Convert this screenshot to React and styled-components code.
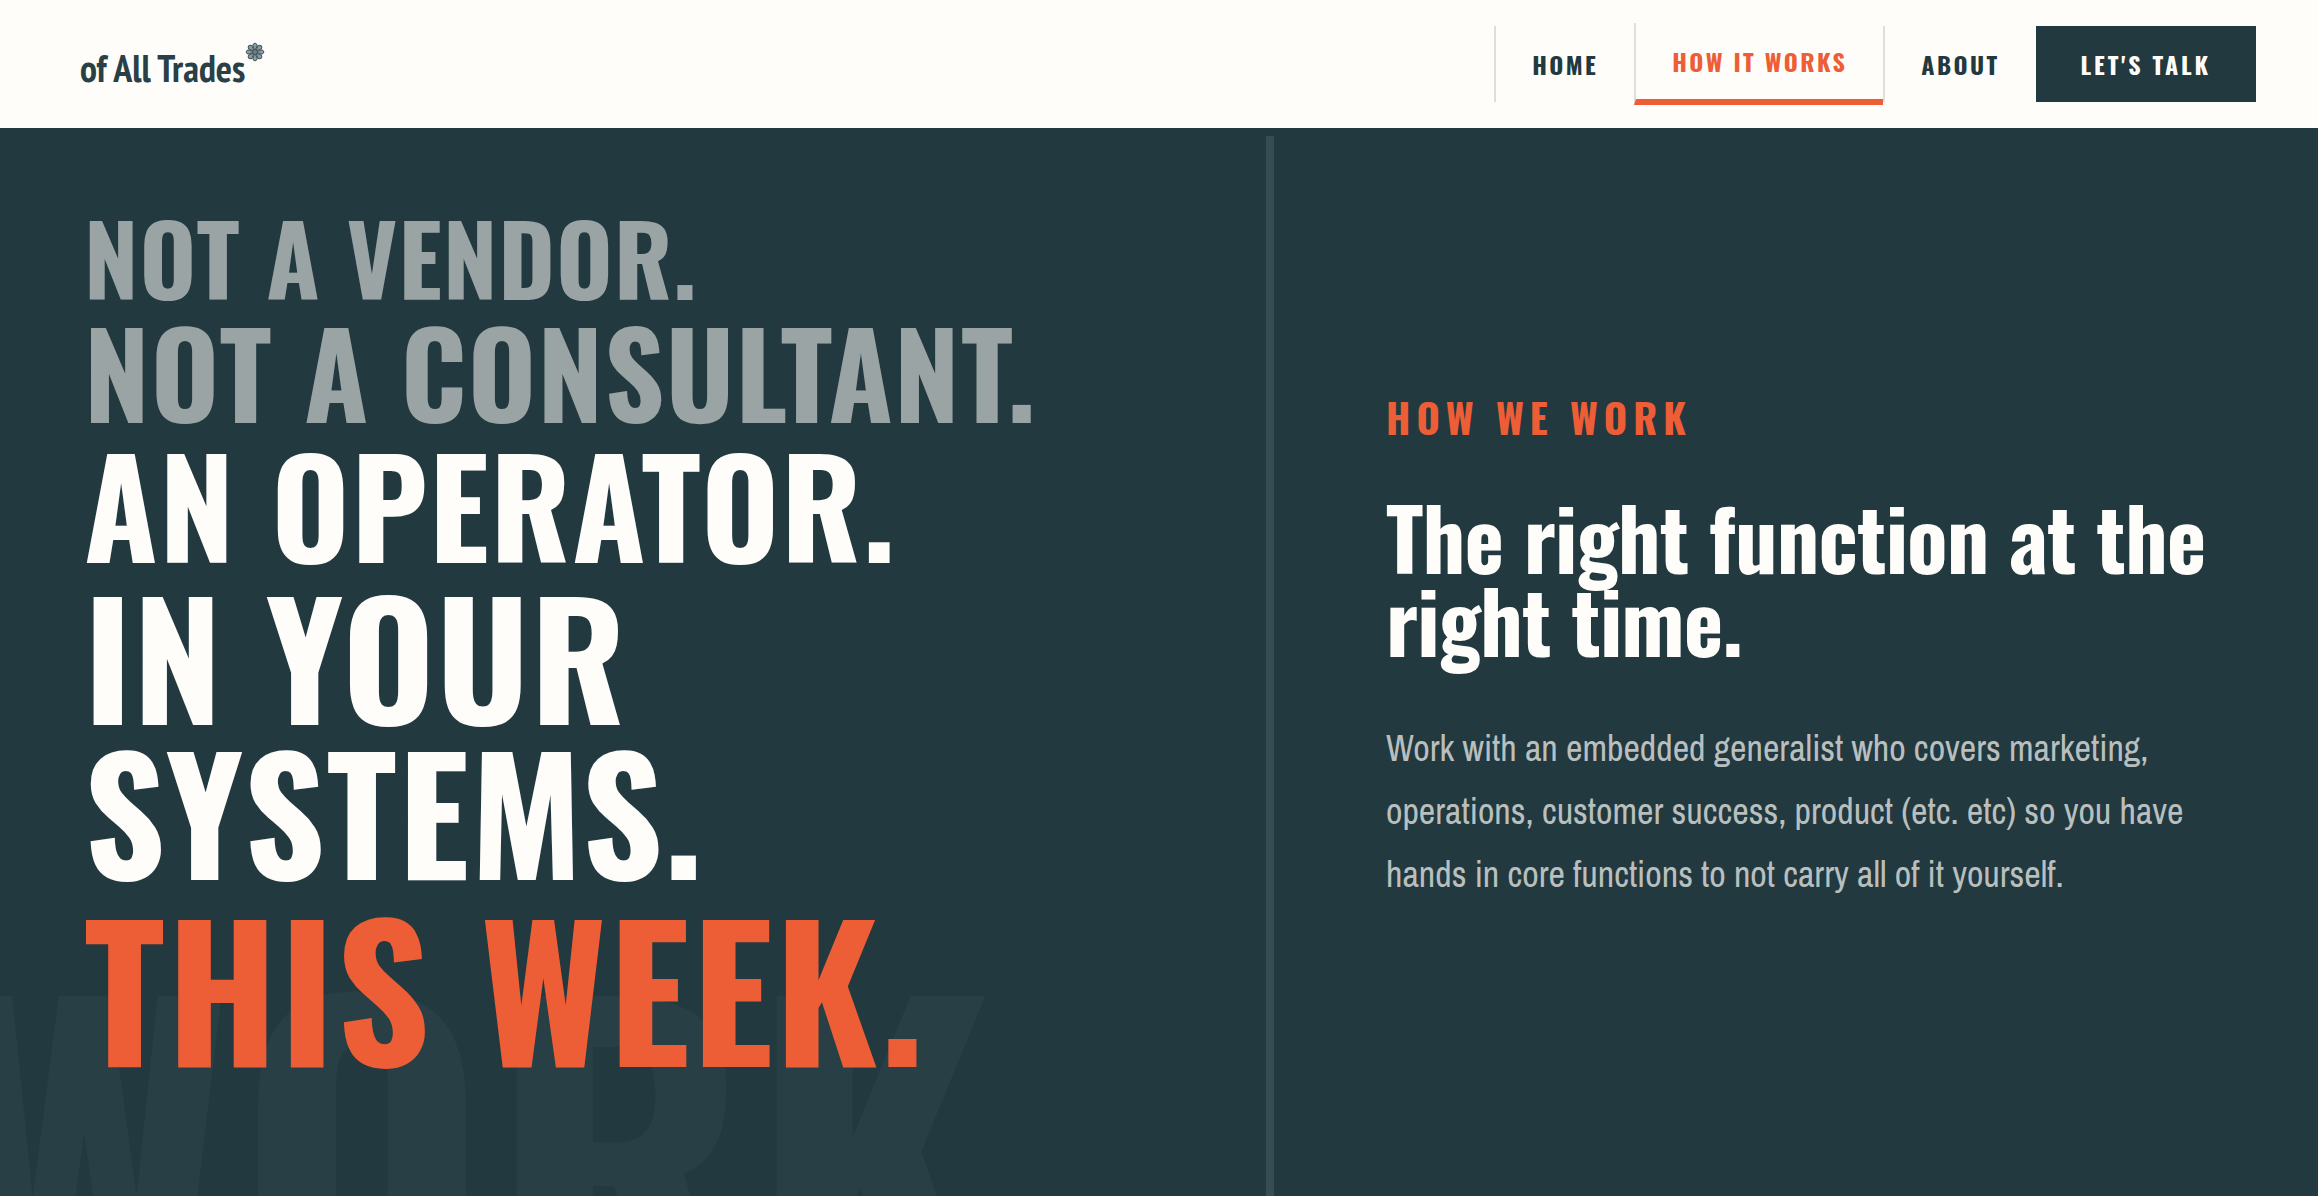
import React from "react";
import styled, { createGlobalStyle } from "styled-components";

const ink = "#22393f";
const cream = "#fefdf9";
const orange = "#ed5e37";

const GlobalStyle = createGlobalStyle`
  *, *::before, *::after {
    box-sizing: border-box;
  }

  body {
    margin: 0;
    background: ${ink};
    font-family: "Arial Narrow", "Archivo Narrow", "Liberation Sans", sans-serif;
  }
`;

const Page = styled.div`
  display: flex;
  flex-direction: column;
  min-height: 100vh;
`;

const Header = styled.header`
  display: flex;
  justify-content: space-between;
  align-items: center;
  height: 136px;
  padding: 0 62px 0 80px;
  background: ${cream};
  border-bottom: 8px solid ${ink};
`;

const Logo = styled.a`
  display: flex;
  align-items: flex-start;
  padding-top: 8px;
  color: #2a4047;
  font-family: "PT Sans Narrow", "Open Sans Condensed", sans-serif;
  font-size: 38px;
  font-weight: 700;
  line-height: 52px;
  text-decoration: none;
`;

const Nav = styled.nav`
  display: flex;
  align-items: center;
`;

const NavLink = styled.a`
  padding: 20px 36px;
  border-left: 2px solid rgba(34, 57, 63, 0.15);
  border-bottom: ${(p) => (p.$active ? `6px solid ${orange}` : "none")};
  color: ${(p) => (p.$active ? orange : ink)};
  font-family: Oswald, sans-serif;
  font-size: 24px;
  font-weight: 700;
  line-height: 36px;
  letter-spacing: 0.1em;
  text-transform: uppercase;
  text-decoration: none;
`;

const TalkLink = styled(NavLink)`
  padding: 20px 45px;
  border-left: none;
  background: ${ink};
  color: ${cream};
  letter-spacing: 0.12em;
`;

const Hero = styled.main`
  position: relative;
  flex: 1;
  display: grid;
  grid-template-columns: 1274fr 1044fr;
  overflow: hidden;
`;

const Watermark = styled.span`
  position: absolute;
  left: -64px;
  bottom: -166px;
  color: rgba(254, 253, 249, 0.03);
  font-family: Oswald, sans-serif;
  font-size: 426px;
  font-weight: 700;
  line-height: 1;
  letter-spacing: 0.01em;
  pointer-events: none;
`;

const Left = styled.section`
  padding: 73px 80px 40px 84px;
  border-right: 8px solid rgba(254, 253, 249, 0.1);
`;

const Headline = styled.h1`
  position: relative;
  display: flex;
  flex-direction: column;
  gap: 9px;
  margin: 0;
  font-family: Oswald, sans-serif;
  font-weight: 700;
  text-transform: uppercase;
`;

const Line = styled.span`
  color: ${(p) => p.$color || cream};
  font-size: ${(p) => p.$size}px;
  line-height: 0.98;
  letter-spacing: 0.01em;
`;

const Right = styled.section`
  display: flex;
  flex-direction: column;
  justify-content: center;
  padding: 0 112px 40px;
`;

const Eyebrow = styled.p`
  margin: 0 0 48px;
  color: ${orange};
  font-family: Oswald, sans-serif;
  font-size: 40px;
  font-weight: 700;
  line-height: 60px;
  letter-spacing: 0.15em;
  text-transform: uppercase;
`;

const Title = styled.h2`
  margin: 0 0 56px;
  color: ${cream};
  font-family: Oswald, sans-serif;
  font-size: 84px;
  font-weight: 700;
  line-height: 83px;
  letter-spacing: -0.01em;
`;

const Text = styled.p`
  margin: 0;
  color: rgba(254, 253, 249, 0.7);
  font-size: 36px;
  line-height: 63px;
`;

const muted = "rgba(254, 253, 249, 0.55)";

const lines = [
  { text: "Not a vendor.", size: 97, color: muted },
  { text: "Not a consultant.", size: 117, color: muted },
  { text: "An operator.", size: 134 },
  { text: "In your systems.", size: 158 },
  { text: "This week.", size: 182, color: orange },
];

const petals = [0, 45, 90, 135, 180, 225, 270, 315];

const Flower = () => (
  <svg width="20" height="20" viewBox="0 0 20 20" aria-hidden="true">
    {petals.map((angle) => (
      <g key={angle} transform={`rotate(${angle} 10 10)`}>
        <path
          d="M10 9 L8 4 A2.1 2.1 0 1 1 12 4 Z"
          fill="#8d9ca0"
          stroke="#3c5158"
          strokeWidth="1"
        />
      </g>
    ))}
    <circle cx="10" cy="10" r="2" fill="#6b7d82" />
  </svg>
);

const App = () => {
  return (
    <Page>
      <GlobalStyle />
      <Header>
        <Logo href="#">
          <span>of All Trades</span>
          <Flower />
        </Logo>
        <Nav>
          <NavLink href="#home">Home</NavLink>
          <NavLink href="#how" $active>
            How it works
          </NavLink>
          <NavLink href="#about">About</NavLink>
          <TalkLink href="#talk">Let's talk</TalkLink>
        </Nav>
      </Header>
      <Hero>
        <Watermark aria-hidden="true">WORK</Watermark>
        <Left>
          <Headline>
            {lines.map((line) => (
              <Line key={line.text} $size={line.size} $color={line.color}>
                {line.text}
              </Line>
            ))}
          </Headline>
        </Left>
        <Right>
          <Eyebrow>How we work</Eyebrow>
          <Title>The right function at the right time.</Title>
          <Text>
            Work with an embedded generalist who covers marketing, operations,
            customer success, product (etc. etc) so you have hands in core
            functions to not carry all of it yourself.
          </Text>
        </Right>
      </Hero>
    </Page>
  );
};

export default App;
